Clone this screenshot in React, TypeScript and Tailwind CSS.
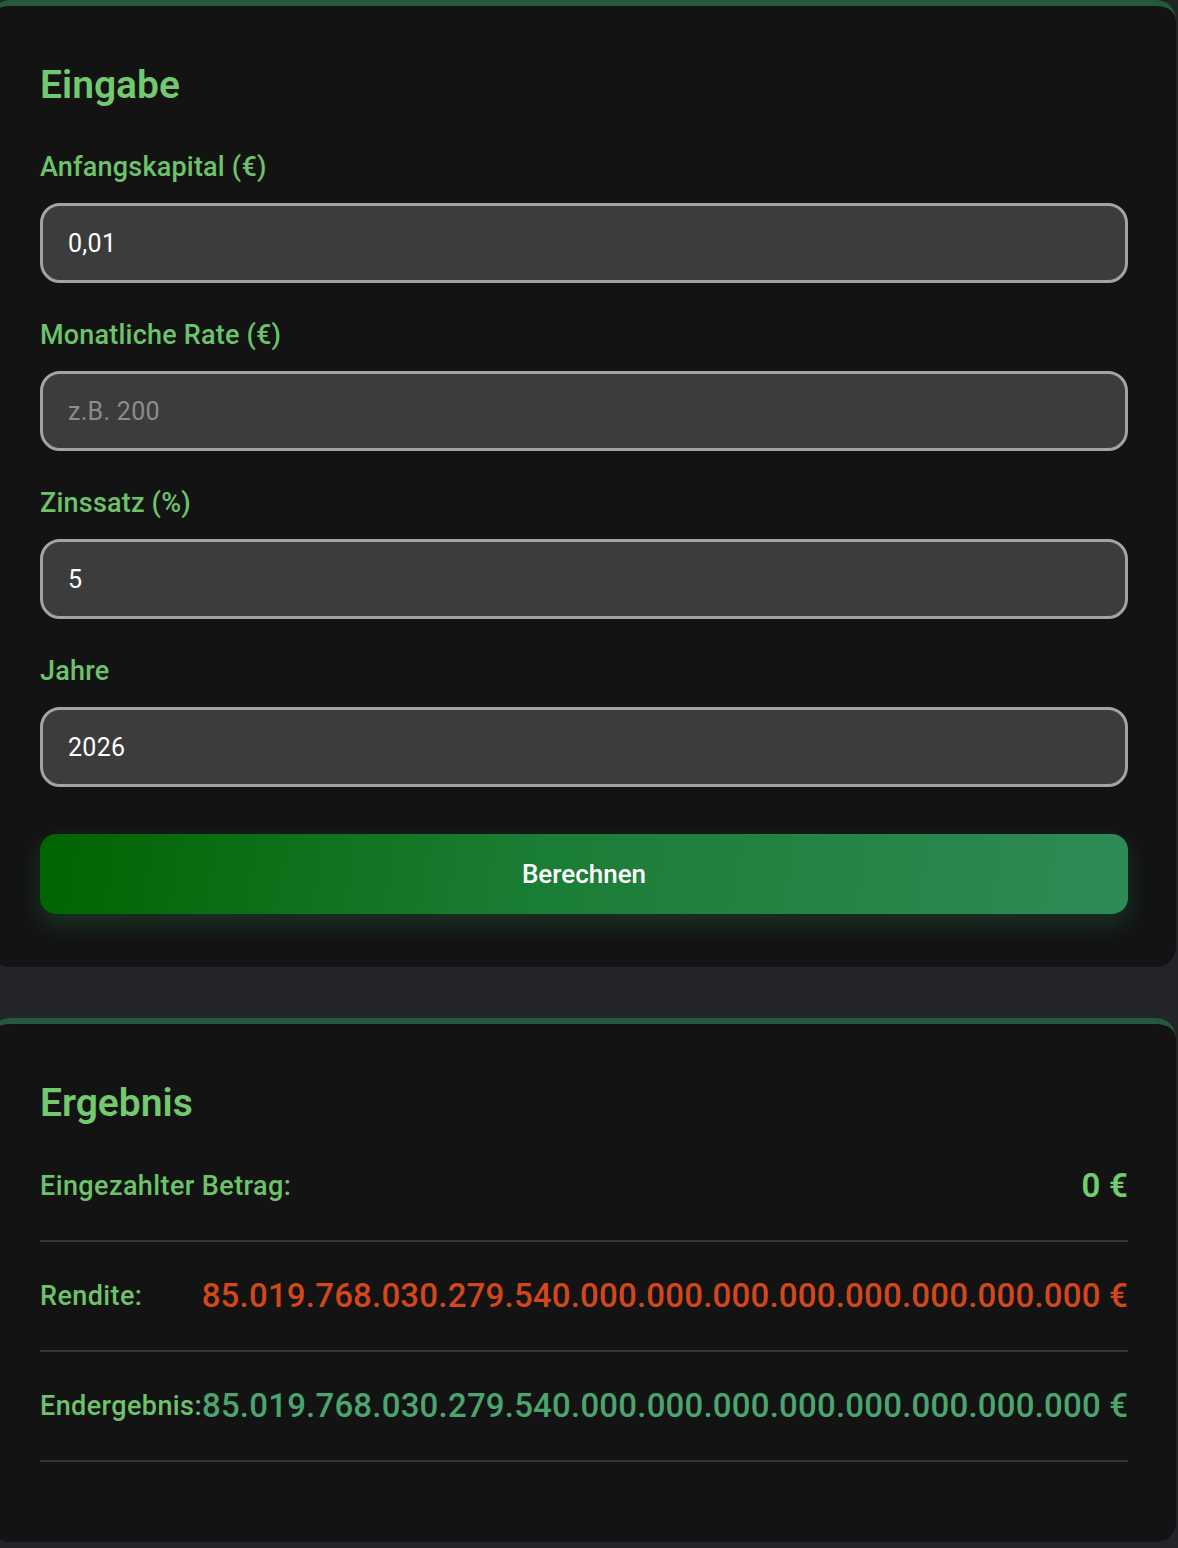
import { useState } from 'react';

const font = { fontFamily: 'Roboto, "Noto Sans", sans-serif' };

interface FieldProps {
  label: string;
  value: string;
  placeholder?: string;
  onChange: (v: string) => void;
}

function Field({ label, value, placeholder, onChange }: FieldProps) {
  return (
    <div className="flex flex-col">
      <label className="text-[27px] leading-[32px] font-medium tracking-[0.2px] text-[#6cc36a]">{label}</label>
      <input
        value={value}
        placeholder={placeholder}
        onChange={(e) => onChange(e.target.value)}
        className="mt-[20px] h-[80px] w-full rounded-[20px] border-[3px] border-[#a3a3a3] bg-[#3c3c3c] px-[25px] text-[25px] tracking-[0.3px] text-white placeholder:text-[#8c8c8c] outline-none"
        style={font}
      />
    </div>
  );
}

interface ResultRowProps {
  label: string;
  value: string;
  valueClass: string;
}

function ResultRow({ label, value, valueClass }: ResultRowProps) {
  return (
    <div className="flex items-center justify-between border-b-2 border-[#353535] py-[34px]">
      <span className="text-[27px] leading-[40px] font-medium tracking-[0.4px] text-[#6cc36a] whitespace-nowrap">{label}</span>
      <span className={`text-[33px] leading-[40px] font-medium tracking-[0.2px] whitespace-nowrap ${valueClass}`}>{value}</span>
    </div>
  );
}

export default function App() {
  const [capital, setCapital] = useState('0,01');
  const [rate, setRate] = useState('');
  const [interest, setInterest] = useState('5');
  const [years, setYears] = useState('2026');

  const big = '85.019.768.030.279.540.000.000.000.000.000.000.000.000 €';

  return (
    <div className="min-h-[1548px] bg-[#232427] overflow-hidden" style={font}>
      {/* Eingabe card */}
      <div className="ml-[-10px] mr-[2px] rounded-[20px] border-t-[6px] border-[#24593b] bg-[#131313] pl-[50px] pr-[48px] pt-[56px] pb-[53px]">
        <h2 className="text-[39px] leading-[46px] font-semibold text-[#72c96e]">Eingabe</h2>
        <div className="mt-[43px] flex flex-col gap-[36px]">
          <Field label="Anfangskapital (€)" value={capital} onChange={setCapital} />
          <Field label="Monatliche Rate (€)" value={rate} placeholder="z.B. 200" onChange={setRate} />
          <Field label="Zinssatz (%)" value={interest} onChange={setInterest} />
          <Field label="Jahre" value={years} onChange={setYears} />
        </div>
        <button className="mt-[47px] h-[80px] w-full rounded-[16px] bg-[linear-gradient(100deg,#006400,#1a7d34_45%,#2e8b57)] text-[26px] font-medium text-white shadow-[0_10px_24px_rgba(46,139,87,0.28)]">
          Berechnen
        </button>
      </div>

      {/* Ergebnis card */}
      <div className="mt-[51px] ml-[-10px] mr-[2px] rounded-[20px] border-t-[6px] border-[#24593b] bg-[#131313] pl-[50px] pr-[48px] pt-[56px] pb-[80px]">
        <h2 className="text-[39px] leading-[46px] font-semibold text-[#72c96e]">Ergebnis</h2>
        <div className="mt-[6px] flex flex-col">
          <ResultRow label="Eingezahlter Betrag:" value="0 €" valueClass="text-[#6fcf6c] font-semibold" />
          <ResultRow label="Rendite:" value={big} valueClass="text-[#d4471b]" />
          <ResultRow label="Endergebnis:" value={big} valueClass="text-[#4aa56e]" />
        </div>
      </div>
    </div>
  );
}
